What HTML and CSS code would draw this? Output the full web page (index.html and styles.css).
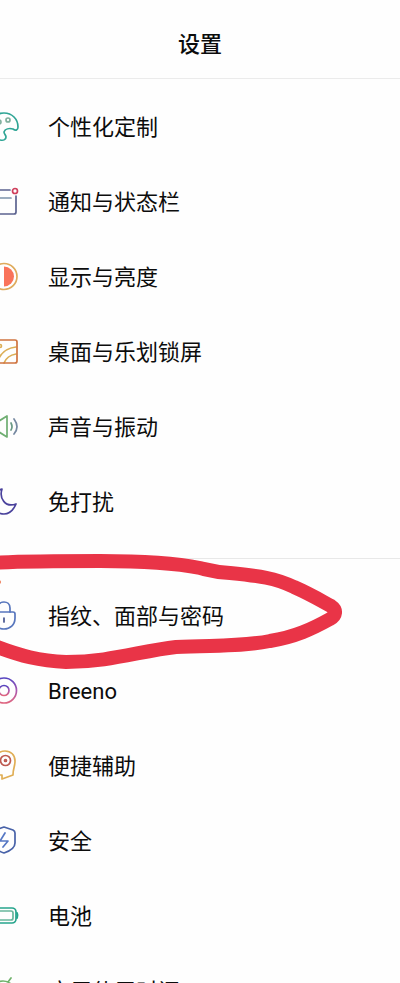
FILE: index.html
```html
<!DOCTYPE html>
<html lang="zh-CN">
<head>
    <meta charset="UTF-8">
    <meta name="viewport" content="width=device-width, initial-scale=1.0">
    <title>设置</title>
    <link rel="stylesheet" href="styles.css">
</head>
<body>

    <header class="header">
        <h1>设置</h1>
    </header>

    <main>
        <nav class="group">
            <a class="row" href="#">
                <svg class="icon" viewBox="0 0 20 32" stroke="#2fa595">
                    <path d="M-10 16C-10 8-4 2 4 2C12 2 18 8 18 16C18 19 16 20 13 18C9 17 5 18 4 21C4 23 6 24 6 26C6 28 4 30 0 29C-6 28-10 23-10 16Z"/>
                    <circle cx="8" cy="9" r="2" stroke="#7fae9c"/>
                    <circle cx="-1" cy="11" r="2" stroke="#7fae9c"/>
                </svg>
                <span>个性化定制</span>
            </a>
            <a class="row" href="#">
                <svg class="icon" viewBox="0 0 20 32" stroke="#5c6390">
                    <path d="M10 4H-8V28H14Q16 28 16 26V10"/>
                    <path d="M-4 12H11" stroke="#7c93ab"/>
                    <circle cx="15" cy="5" r="2.5" stroke="#cf3f5c"/>
                </svg>
                <span>通知与状态栏</span>
            </a>
            <a class="row" href="#">
                <svg class="icon" viewBox="0 0 20 32" stroke="#dfab5c">
                    <circle cx="4" cy="15.5" r="13"/>
                    <path d="M4 5.5A10 10 0 0 1 4 25.5Z" fill="#f9735a" stroke="none"/>
                </svg>
                <span>显示与亮度</span>
            </a>
            <a class="row" href="#">
                <svg class="icon" viewBox="0 0 20 32" stroke="#cf7440">
                    <path d="M-3 27C0 17 6 12 16 11M4 27C6 22 10 19 16 18" stroke="#dcae55"/>
                    <circle cx="0" cy="10" r="1.5" stroke="#dcae55"/>
                    <rect x="-10" y="4" width="27" height="23" rx="2"/>
                </svg>
                <span>桌面与乐划锁屏</span>
            </a>
            <a class="row" href="#">
                <svg class="icon" viewBox="0 0 20 32" stroke="#6fae72">
                    <path d="M-8 10H-1L7 5V26L-1 21H-8Z"/>
                    <path d="M11 12Q13 16 11 19" stroke="#6b9a86"/>
                    <path d="M14 8Q20 16 14 23" stroke="#7588a0"/>
                </svg>
                <span>声音与振动</span>
            </a>
            <a class="row" href="#">
                <svg class="icon" viewBox="0 0 20 32" stroke="#4a429c">
                    <path d="M2 3C-1 12 5 22 16 18C13 25 9 28 4 28C-3 28-8 22-8 16C-8 10-4 5 2 3Z"/>
                </svg>
                <span>免打扰</span>
            </a>
        </nav>

        <nav class="group">
            <a class="row" href="#">
                <svg class="icon" viewBox="0 0 20 32" stroke="#5776bd">
                    <path d="M-7 12H13Q15 12 15 14V18C15 25 10 29 4 29C-2 29-7 25-7 18Z"/>
                    <path d="M-2 12V8C-2 0 10 0 10 8V12"/>
                    <path d="M4 18V22" stroke="#46548e"/>
                </svg>
                <span>指纹、面部与密码</span>
            </a>
            <a class="row" href="#">
                <svg class="icon" viewBox="0 0 20 32" stroke="url(#breeno)">
                    <defs>
                        <linearGradient id="breeno" x1="0" y1="0" x2="0" y2="1">
                            <stop offset="0" stop-color="#5544c0"/>
                            <stop offset="0.5" stop-color="#a958b0"/>
                            <stop offset="1" stop-color="#df657f"/>
                        </linearGradient>
                    </defs>
                    <circle cx="4" cy="15.5" r="12.5"/>
                    <circle cx="4" cy="15.5" r="5"/>
                </svg>
                <span>Breeno</span>
            </a>
            <a class="row" href="#">
                <svg class="icon" viewBox="0 0 20 32" stroke="#e0ae55">
                    <path d="M-6 24C-10 12-4 1 5 1C11 1 15 5 15 11C15 17 13 18 13 25L2 29V25H-4"/>
                    <circle cx="5.5" cy="10.5" r="5" stroke="#bd5a50"/>
                    <circle cx="5.5" cy="10.5" r="1" stroke="#bd5a50"/>
                </svg>
                <span>便捷辅助</span>
            </a>
            <a class="row" href="#">
                <svg class="icon" viewBox="0 0 20 32" stroke="#4862a8">
                    <path d="M4 2L13 5Q15 6 15 8V18C15 23 10 26 4 28C-2 26-7 23-7 18V6Z"/>
                    <path d="M5 8L0 16H8L3 22" stroke="#5577c4"/>
                </svg>
                <span>安全</span>
            </a>
            <a class="row" href="#">
                <svg class="icon" viewBox="0 0 20 32" stroke="#27a58d">
                    <rect x="-10" y="8" width="26" height="15" rx="4"/>
                    <rect x="-7" y="11" width="20" height="9" rx="2" stroke="#68b79c"/>
                    <path d="M17 13Q18 15 17 18" stroke-width="2"/>
                </svg>
                <span>电池</span>
            </a>
            <a class="row" href="#">
                <svg class="icon" viewBox="0 0 20 32" stroke="#6fb26b">
                    <path d="M-8 18C-8 10-2 6 3 6C9 6 14 10 15 17M8 7L11 3"/>
                </svg>
                <span>应用使用时间</span>
            </a>

            <!-- hand-drawn circle around the lock entry -->
            <svg class="marker" viewBox="0 0 350 140">
                <path d="M-8 23C20 21 60 21 100 21C150 21 180 24 200 28C212 31 214 32 230 33C260 36 275 38 294 47C310 54 320 60 331 66C337 70 336 76 330 79C312 89 295 97 270 101C240 107 215 105 176 107C140 111 110 122 66 122C40 121 20 116 -8 105"/>
                <circle cx="-1" cy="42" r="2"/>
            </svg>
        </nav>
    </main>

</body>
</html>
```

FILE: styles.css
```css
body {
    font-family: Roboto, "Noto Sans CJK SC", sans-serif;
    height: 100vh;
    margin: 0;
    overflow: hidden;
    background-color: #fefefe;
    color: #0c0c0c;
}

.header {
    padding: 29px 0 17px;
    border-bottom: 1px solid #ebebeb;
    text-align: center;
}

.header h1 {
    margin: 0;
    font-size: 22px;
    font-weight: 500;
    line-height: 32px;
}

.group {
    position: relative;
    padding: 10px 0 19px;
}

.group + .group {
    padding-top: 19px;
    border-top: 1px solid #e8e8e8;
}

.row {
    display: flex;
    align-items: center;
    gap: 28px;
    height: 75px;
    color: inherit;
    font-size: 22px;
    line-height: 32px;
    text-decoration: none;
}

.row span {
    padding-top: 2px;
}

.icon {
    width: 20px;
    height: 32px;
    fill: none;
    stroke-width: 1.7;
    stroke-linecap: round;
    stroke-linejoin: round;
}

.marker {
    position: absolute;
    top: -19px;
    left: 0;
    width: 350px;
    height: 140px;
    fill: none;
    stroke: #e93447;
    stroke-width: 14;
    stroke-linejoin: round;
    pointer-events: none;
}

.marker circle {
    fill: #ee8260;
    stroke: none;
}
```
